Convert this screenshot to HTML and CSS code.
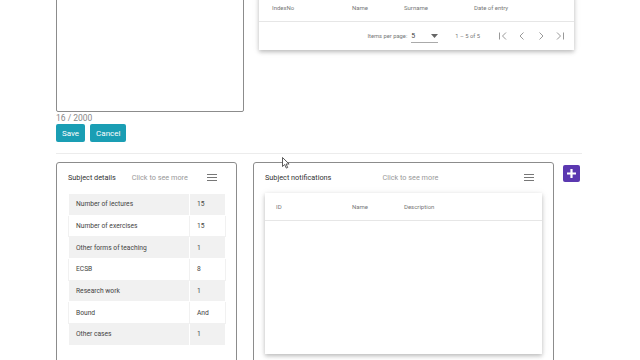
FILE: index.html
```html
<!DOCTYPE html>
<html lang="en">
<head>
  <meta charset="UTF-8">
  <meta name="viewport" content="width=device-width, initial-scale=1">
  <title>Subject</title>
  <link rel="stylesheet" href="styles.css">
</head>
<body>

  <div class="page">

    <div class="top-row">
      <div class="note-form">
        <textarea class="note-input"></textarea>
        <div class="counter">16 / 2000</div>
        <div class="form-actions">
          <button class="btn">Save</button>
          <button class="btn">Cancel</button>
        </div>
      </div>

      <div class="students-card">
        <div class="table-head students-head">
          <span>IndexNo</span>
          <span>Name</span>
          <span>Surname</span>
          <span>Date of entry</span>
        </div>
        <div class="paginator">
          <span class="pg-label">Items per page:</span>
          <div class="pg-select">
            <span>5</span>
            <svg width="7" height="4" viewBox="0 0 7 4"><path d="M0 0h7L3.5 4z" fill="#666"/></svg>
          </div>
          <span class="pg-range">1 – 5 of 5</span>
          <div class="pg-icons">
            <svg width="10" height="10" viewBox="0 0 10 10"><path d="M1.5 1.5v7M8 1.5L4.5 5 8 8.5" fill="none" stroke="#999" stroke-width="1"/></svg>
            <svg width="10" height="10" viewBox="0 0 10 10"><path d="M6.5 1.5L3 5l3.5 3.5" fill="none" stroke="#999" stroke-width="1"/></svg>
            <svg width="10" height="10" viewBox="0 0 10 10"><path d="M3.5 1.5L7 5 3.5 8.5" fill="none" stroke="#999" stroke-width="1"/></svg>
            <svg width="10" height="10" viewBox="0 0 10 10"><path d="M8.5 1.5v7M2 1.5L5.5 5 2 8.5" fill="none" stroke="#999" stroke-width="1"/></svg>
          </div>
        </div>
      </div>
    </div>

    <hr class="divider">

    <div class="bottom-row">
      <div class="panel panel-details">
        <div class="panel-header">
          <span class="panel-title">Subject details</span>
          <span class="panel-more">Click to see more</span>
          <span class="hamburger"><i></i><i></i><i></i></span>
        </div>
        <table class="details">
          <tr><td>Number of lectures</td><td>15</td></tr>
          <tr><td>Number of exercises</td><td>15</td></tr>
          <tr><td>Other forms of teaching</td><td>1</td></tr>
          <tr><td>ECSB</td><td>8</td></tr>
          <tr><td>Research work</td><td>1</td></tr>
          <tr><td>Bound</td><td>And</td></tr>
          <tr><td>Other cases</td><td>1</td></tr>
        </table>
      </div>

      <div class="panel panel-notes">
        <div class="panel-header">
          <span class="panel-title">Subject notifications</span>
          <span class="panel-more">Click to see more</span>
          <span class="hamburger"><i></i><i></i><i></i></span>
        </div>
        <div class="notes-card">
          <div class="table-head notes-head">
            <span>ID</span>
            <span>Name</span>
            <span>Description</span>
          </div>
        </div>
      </div>

      <button class="add-btn">
        <svg width="11" height="11" viewBox="0 0 11 11"><path d="M5.5 1v9M1 5.5h9" stroke="#fff" stroke-width="2.2"/></svg>
      </button>
    </div>

  </div>

  <svg class="cursor" width="8" height="12" viewBox="0 0 8 12"><path d="M0.5 0.5v9l2.2-2 1.6 3.6 1.4-.6-1.6-3.5h3z" fill="#fff" stroke="#333" stroke-width="0.8"/></svg>

</body>
</html>
```

FILE: styles.css
```css
body {
  margin: 0;
  font-family: Roboto, "Liberation Sans", sans-serif;
  background-color: #fff;
  color: #333;
  overflow: hidden;
}
.page {
  width: 526px;
  margin-top: -20px;
  padding-left: 56px;
}
.top-row {
  display: flex;
  align-items: flex-start;
}
.note-form {
  width: 188px;
}
.note-input {
  display: block;
  box-sizing: border-box;
  width: 188px;
  height: 132px;
  border: 1px solid #8c8c8c;
  border-radius: 2px;
  resize: none;
  margin: 0;
}
.counter {
  font-size: 8.5px;
  line-height: 11px;
  color: #888;
  margin-top: 1px;
}
.form-actions {
  display: flex;
  gap: 5px;
}
.btn {
  height: 18px;
  padding: 0 6px;
  border: none;
  border-radius: 2px;
  background-color: #1a9eb4;
  color: #fff;
  font-family: Roboto, "Liberation Sans", sans-serif;
  font-size: 8px;
}
.students-card {
  width: 315px;
  margin-left: 15px;
  margin-top: 14px;
  background: #fff;
  box-shadow: 0 2px 4px rgba(0, 0, 0, 0.22), 0 1px 8px rgba(0, 0, 0, 0.08);
}
.table-head {
  display: grid;
  align-items: center;
  height: 27px;
  font-size: 6px;
  color: #777;
  border-bottom: 1px solid #e6e6e6;
}
.students-head {
  grid-template-columns: 80px 52px 70px 1fr;
  padding-left: 13px;
}
.paginator {
  display: flex;
  align-items: center;
  justify-content: flex-end;
  height: 28px;
  font-size: 5.8px;
  color: #777;
  padding-right: 9px;
}
.pg-select {
  display: flex;
  align-items: center;
  justify-content: space-between;
  width: 27px;
  height: 12px;
  margin-left: 4px;
  border-bottom: 1px solid #aaa;
  color: #444;
  font-size: 7px;
}
.pg-range {
  margin-left: 17px;
}
.pg-icons {
  display: flex;
  gap: 9px;
  margin-left: 18px;
}
.divider {
  border: none;
  border-top: 1px solid #ececec;
  margin: 11px 0 8px;
}
.bottom-row {
  display: flex;
  align-items: flex-start;
}
.panel {
  box-sizing: border-box;
  height: 220px;
  border: 1px solid #8c8c8c;
  border-radius: 3px;
  padding: 0 19px 0 11px;
  background: #fff;
}
.panel-details {
  width: 181px;
}
.panel-notes {
  width: 301px;
  margin-left: 16px;
}
.panel-header {
  display: flex;
  align-items: center;
  height: 29px;
  font-size: 7.3px;
}
.panel-title {
  color: #333;
}
.panel-more {
  color: #999;
  margin-left: 16px;
}
.panel-notes .panel-more {
  margin-left: 51px;
}
.hamburger {
  display: flex;
  flex-direction: column;
  gap: 2px;
  margin-left: auto;
}
.hamburger i {
  display: block;
  width: 10px;
  height: 1px;
  background: #777;
}
.details {
  width: 158px;
  margin-top: 1px;
  border-collapse: collapse;
  font-size: 6.7px;
  color: #444;
}
.details td {
  height: 20.7px;
  padding: 0 7px;
  border: 1px solid #fff;
}
.details tr:nth-child(odd) td {
  background: #f1f1f1;
}
.details tr:nth-child(even) td {
  border-color: #f1f1f1;
}
.details td:last-child {
  width: 21px;
  border-left: 1px solid #e8e8e8;
}
.notes-card {
  width: 277px;
  height: 161px;
  margin-top: 1px;
  background: #fff;
  box-shadow: 0 2px 4px rgba(0, 0, 0, 0.22), 0 1px 8px rgba(0, 0, 0, 0.08);
}
.notes-head {
  grid-template-columns: 76px 52px 1fr;
  padding-left: 11px;
}
.add-btn {
  display: flex;
  align-items: center;
  justify-content: center;
  width: 17px;
  height: 17px;
  margin-left: 9px;
  margin-top: 3px;
  padding: 0;
  border: none;
  border-radius: 2px;
  background: #5b38b0;
}
.cursor {
  position: absolute;
  left: 282px;
  top: 157px;
}
```
